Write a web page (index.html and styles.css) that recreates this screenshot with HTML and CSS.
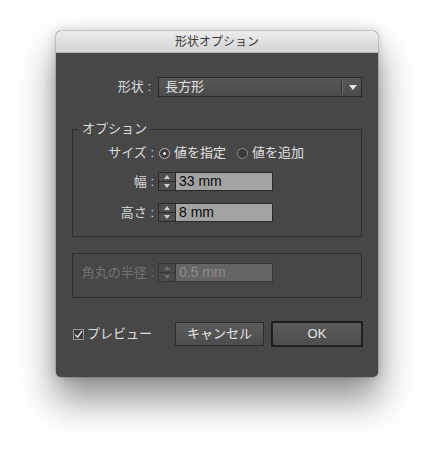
FILE: index.html
```html
<!DOCTYPE html>
<html lang="ja">
<head>
<meta charset="utf-8">
<title>形状オプション</title>
<link rel="stylesheet" href="styles.css">
</head>
<body>
<div class="dialog">
  <div class="titlebar">形状オプション</div>
  <div class="content">
    <div class="row shape-row">
      <span class="label label-outer">形状 :</span>
      <div class="select">
        <span class="select-text">長方形</span>
        <span class="select-sep"></span>
        <span class="select-arrow"></span>
      </div>
    </div>

    <fieldset class="group group-options">
      <legend class="legend">オプション</legend>
      <div class="row size-row">
        <span class="label">サイズ :</span>
        <span class="radio radio-on"></span>
        <span class="radio-text">値を指定</span>
        <span class="radio"></span>
        <span class="radio-text">値を追加</span>
      </div>
      <div class="row width-row">
        <span class="label">幅 :</span>
        <div class="num">
          <span class="spin"><span class="up"></span><span class="down"></span></span>
          <span class="num-field">33 mm</span>
        </div>
      </div>
      <div class="row height-row">
        <span class="label">高さ :</span>
        <div class="num">
          <span class="spin"><span class="up"></span><span class="down"></span></span>
          <span class="num-field">8 mm</span>
        </div>
      </div>
    </fieldset>

    <fieldset class="group group-corner">
      <div class="row corner-row disabled">
        <span class="label">角丸の半径 :</span>
        <div class="num">
          <span class="spin"><span class="up"></span><span class="down"></span></span>
          <span class="num-field">0.5 mm</span>
        </div>
      </div>
    </fieldset>

    <div class="buttons">
      <label class="check">
        <span class="checkbox">
          <svg width="9" height="9" viewBox="0 0 9 9"><path d="M1.3 4.6 L3.6 7.2 L8 1.2" fill="none" stroke="#e8e8e8" stroke-width="1.4"/></svg>
        </span>
        <span class="check-text">プレビュー</span>
      </label>
      <button class="btn btn-cancel">キャンセル</button>
      <button class="btn btn-ok">OK</button>
    </div>
  </div>
</div>
</body>
</html>
```

FILE: styles.css
```css
html, body {
  margin: 0;
  padding: 0;
  background: #ffffff;
}

body {
  padding-top: 31px;
  padding-left: 56px;
  height: 457px;
  box-sizing: border-box;
  font-family: "Liberation Sans", "Noto Sans CJK JP", sans-serif;
  font-size: 13px;
  color: #dcdcdc;
}

.dialog {
  width: 322px;
  background: #474747;
  border-radius: 5px;
  box-shadow: 0 22px 36px 2px rgba(0, 0, 0, 0.42), 0 0 12px rgba(0, 0, 0, 0.18), 0 0 0 1px rgba(0, 0, 0, 0.12);
}

.titlebar {
  height: 22px;
  box-sizing: border-box;
  background: linear-gradient(#ececec, #d4d4d4);
  border-bottom: 1px solid #b4b4b4;
  border-radius: 5px 5px 0 0;
  text-align: center;
  font-size: 12px;
  line-height: 22px;
  color: #3a3a3a;
}

.content {
  padding: 24px 16px 30px 16px;
}

.row {
  display: flex;
  align-items: center;
}

.label {
  width: 81px;
  padding-right: 4px;
  text-align: right;
  line-height: 18px;
  white-space: nowrap;
  color: #dadada;
}

.label-outer {
  width: 79px;
  padding-right: 7px;
}

/* dropdown */
.shape-row {
  height: 20px;
}

.select {
  width: 204px;
  height: 20px;
  box-sizing: border-box;
  border: 1px solid #2a2a2a;
  background: linear-gradient(#585858, #4b4b4b);
  display: flex;
  align-items: center;
}

.select-text {
  flex: 1;
  padding-left: 6px;
  line-height: 18px;
  color: #e2e2e2;
}

.select-sep {
  width: 1px;
  height: 14px;
  background: #333;
  border-right: 1px solid #6a6a6a;
  margin-right: 6px;
}

.select-arrow {
  width: 0;
  height: 0;
  border-left: 4px solid transparent;
  border-right: 4px solid transparent;
  border-top: 5px solid #e6e6e6;
  margin-right: 4px;
}

/* group boxes */
.group {
  margin: 0;
  padding: 0;
  min-inline-size: 0;
  border: 1px solid #2e2e2e;
}

.group-options {
  margin-top: 23px;
  padding-bottom: 14px;
}

.legend {
  margin-left: 6px;
  padding: 0 3px;
  line-height: 18px;
  color: #dadada;
}

.size-row {
  height: 20px;
  margin-top: 5px;
}

.width-row {
  margin-top: 9px;
}

.height-row {
  margin-top: 12px;
}

.radio {
  width: 11px;
  height: 11px;
  box-sizing: border-box;
  border-radius: 50%;
  border: 1px solid #8e8e8e;
  background: #393939;
  margin-left: 1px;
  display: flex;
  align-items: center;
  justify-content: center;
}

.radio-on {
  border-color: #bdbdbd;
}

.radio-on::after {
  content: "";
  width: 3px;
  height: 3px;
  border-radius: 50%;
  background: #eeeeee;
}

.radio-text {
  margin-left: 4px;
  margin-right: 10px;
  line-height: 18px;
  color: #e0e0e0;
}

/* numeric field with spinner */
.num {
  display: flex;
  width: 115px;
  height: 19px;
}

.spin {
  width: 18px;
  height: 19px;
  box-sizing: border-box;
  border: 1px solid #2a2a2a;
  background: #4f4f4f;
  display: flex;
  flex-direction: column;
}

.spin .up,
.spin .down {
  flex: 1;
  display: flex;
  align-items: center;
  justify-content: center;
}

.spin .up {
  border-bottom: 1px solid #2c2c2c;
}

.spin .up::after {
  content: "";
  border-left: 3px solid transparent;
  border-right: 3px solid transparent;
  border-bottom: 4px solid #cfcfcf;
}

.spin .down::after {
  content: "";
  border-left: 3px solid transparent;
  border-right: 3px solid transparent;
  border-top: 4px solid #cfcfcf;
}

.num-field {
  flex: 1;
  box-sizing: border-box;
  height: 19px;
  border: 1px solid #2a2a2a;
  border-left: none;
  background: #a3a3a3;
  color: #0a0a0a;
  font-size: 14px;
  line-height: 17px;
  padding-left: 3px;
}

/* disabled group */
.group-corner {
  margin-top: 16px;
  padding-top: 9px;
  padding-bottom: 15px;
}

.disabled .label {
  color: #737373;
}

.disabled .spin {
  background: #4a4a4a;
  border-color: #353535;
}

.disabled .spin .up {
  border-bottom-color: #383838;
}

.disabled .spin .up::after {
  border-bottom-color: #707070;
}

.disabled .spin .down::after {
  border-top-color: #707070;
}

.disabled .num-field {
  background: #656565;
  border-color: #353535;
  color: #8c8c8c;
}

/* buttons */
.buttons {
  margin-top: 23px;
  height: 26px;
  display: flex;
  align-items: center;
}

.check {
  display: flex;
  align-items: center;
  margin-left: 1px;
}

.checkbox {
  width: 11px;
  height: 11px;
  box-sizing: border-box;
  border: 1px solid #9a9a9a;
  background: #3a3a3a;
  display: flex;
  align-items: center;
  justify-content: center;
}

.check-text {
  margin-left: 3px;
  line-height: 18px;
  color: #e0e0e0;
}

.btn {
  font-family: "Liberation Sans", "Noto Sans CJK JP", sans-serif;
  font-size: 13px;
  color: #e6e6e6;
  background: linear-gradient(#5b5b5b, #4d4d4d);
  padding: 0;
  margin: 0;
  box-sizing: border-box;
  line-height: 18px;
}

.btn-cancel {
  margin-left: auto;
  width: 89px;
  height: 24px;
  border: 1px solid #2c2c2c;
}

.btn-ok {
  margin-left: 7px;
  margin-right: -1px;
  width: 92px;
  height: 26px;
  border: 2px solid #1f1f1f;
}
```
